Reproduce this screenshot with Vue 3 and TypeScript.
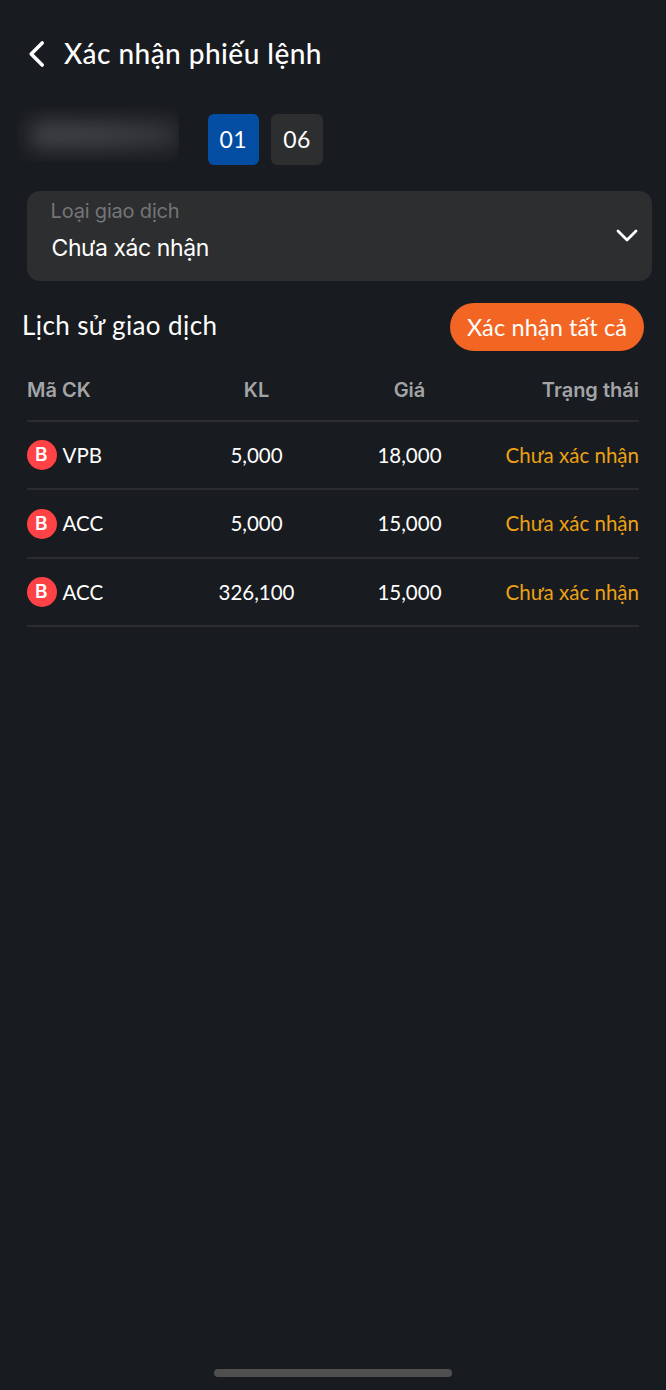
<script setup lang="ts">
interface Order {
  side: string
  symbol: string
  volume: string
  price: string
  status: string
}

const accounts: string[] = ['01', '06']
const activeAccount = '01'

const orders: Order[] = [
  { side: 'B', symbol: 'VPB', volume: '5,000', price: '18,000', status: 'Chưa xác nhận' },
  { side: 'B', symbol: 'ACC', volume: '5,000', price: '15,000', status: 'Chưa xác nhận' },
  { side: 'B', symbol: 'ACC', volume: '326,100', price: '15,000', status: 'Chưa xác nhận' },
]
</script>

<template>
  <main class="screen">
    <header class="topbar">
      <svg class="back" width="18" height="30" viewBox="0 0 18 30" fill="none" stroke="#fff" stroke-width="3.6" stroke-linecap="round" stroke-linejoin="round">
        <path d="M15.2 4 4.2 15l11 11" />
      </svg>
      <h1 class="title">Xác nhận phiếu lệnh</h1>
    </header>

    <section class="accounts">
      <div class="masked"><div class="smudge"></div></div>
      <button v-for="a in accounts" :key="a" class="account" :class="{ active: a === activeAccount }">{{ a }}</button>
    </section>

    <section class="select">
      <div class="select-text">
        <span class="select-label">Loại giao dịch</span>
        <span class="select-value">Chưa xác nhận</span>
      </div>
      <svg width="24" height="16" viewBox="0 0 24 16" fill="none" stroke="#fff" stroke-width="2.8" stroke-linecap="round" stroke-linejoin="round">
        <path d="M3 3l9 9 9-9" />
      </svg>
    </section>

    <section class="history">
      <h2 class="history-title">Lịch sử giao dịch</h2>
      <button class="confirm"><span>Xác nhận tất cả</span></button>
    </section>

    <section class="table">
      <div class="row head">
        <span>Mã CK</span><span class="mid">KL</span><span class="mid">Giá</span><span class="end">Trạng thái</span>
      </div>
      <div v-for="(o, i) in orders" :key="i" class="row">
        <span class="symbol"><i class="side">{{ o.side }}</i><span class="code">{{ o.symbol }}</span></span>
        <span class="mid num">{{ o.volume }}</span>
        <span class="mid num">{{ o.price }}</span>
        <span class="end status">{{ o.status }}</span>
      </div>
    </section>

    <div class="home-bar"></div>
  </main>
</template>

<style>
body {
  background: #181b20;
}
</style>

<style scoped>
.screen {
  box-sizing: border-box;
  width: 666px;
  height: 1390px;
  display: flex;
  flex-direction: column;
  background: #181b20;
  color: #fff;
  font-family: Lato, "Noto Sans", sans-serif;
  overflow: hidden;
}
button {
  border: 0;
  padding: 0;
  font: inherit;
  color: inherit;
}
.topbar {
  display: flex;
  align-items: center;
  height: 108px;
  padding-left: 27px;
}
.title {
  margin: 0 0 2px 19px;
  font-size: 28px;
  font-weight: 500;
  line-height: 36px;
  letter-spacing: 0.46px;
  white-space: nowrap;
}
.accounts {
  display: flex;
  align-items: center;
  height: 63px;
  padding-left: 17px;
}
.masked {
  width: 162px;
  height: 54px;
  margin: -9px 28.5px 0 0;
  overflow: hidden;
  display: flex;
  align-items: center;
}
.smudge {
  width: 148px;
  height: 26px;
  margin-left: 14px;
  background: linear-gradient(90deg, #47474b, #434347 50%, #33353a);
  filter: blur(11px);
}
.account {
  width: 51.5px;
  height: 51.5px;
  margin-right: 12.3px;
  padding-bottom: 1px;
  border-radius: 6px;
  background: #2d2e30;
  font-size: 23px;
  letter-spacing: 0.4px;
}
.account.active {
  background: #034ea2;
}
.select {
  box-sizing: border-box;
  display: flex;
  justify-content: space-between;
  align-items: center;
  width: 625px;
  height: 90px;
  margin: 19.5px 0 0 26.5px;
  padding: 0 13px 0 24px;
  border-radius: 13px;
  background: #2d2e30;
  font-family: Inter, sans-serif;
}
.select-text {
  display: flex;
  flex-direction: column;
  height: 100%;
}
.select-label {
  margin-top: 6px;
  font-size: 20px;
  line-height: 28px;
  letter-spacing: -0.18px;
  color: #747577;
}
.select-value {
  margin: 7px 0 0 1px;
  font-size: 23px;
  line-height: 32px;
  letter-spacing: -0.42px;
}
.history {
  display: flex;
  justify-content: space-between;
  align-items: center;
  height: 48px;
  margin: 22px 22px 0 22px;
}
.history-title {
  margin: 0 0 4px;
  font-size: 26px;
  font-weight: 400;
  letter-spacing: 0.4px;
}
.confirm {
  width: 194px;
  height: 48px;
  padding-top: 1px;
  border-radius: 24px;
  background: #f36523;
  font-size: 23.5px;
  letter-spacing: 0.12px;
  white-space: nowrap;
}
.table {
  width: 612px;
  margin: 10px 0 0 27px;
}
.row {
  box-sizing: border-box;
  display: grid;
  grid-template-columns: repeat(4, 153px);
  align-items: center;
  height: 68.4px;
  border-bottom: 2px solid #2a2c30;
  font-size: 20.5px;
  white-space: nowrap;
}
.head {
  height: 61.6px;
  font-family: Inter, sans-serif;
  font-size: 20px;
  font-weight: 600;
  color: #a3a4a6;
}
.mid {
  text-align: center;
}
.end {
  justify-self: end;
}
.code,
.num,
.status {
  padding-bottom: 1px;
}
.symbol {
  display: flex;
  align-items: center;
  gap: 6px;
}
.side {
  display: flex;
  align-items: center;
  justify-content: center;
  box-sizing: border-box;
  width: 30px;
  height: 30px;
  margin-left: -0.5px;
  padding-right: 0.5px;
  border-radius: 50%;
  background: #ff4245;
  font: 600 19px/30px Inter, sans-serif;
}
.status {
  color: #eda213;
}
.home-bar {
  width: 238px;
  height: 8px;
  margin: auto auto 13px 214px;
  border-radius: 4px;
  background: #504f50;
}
</style>
